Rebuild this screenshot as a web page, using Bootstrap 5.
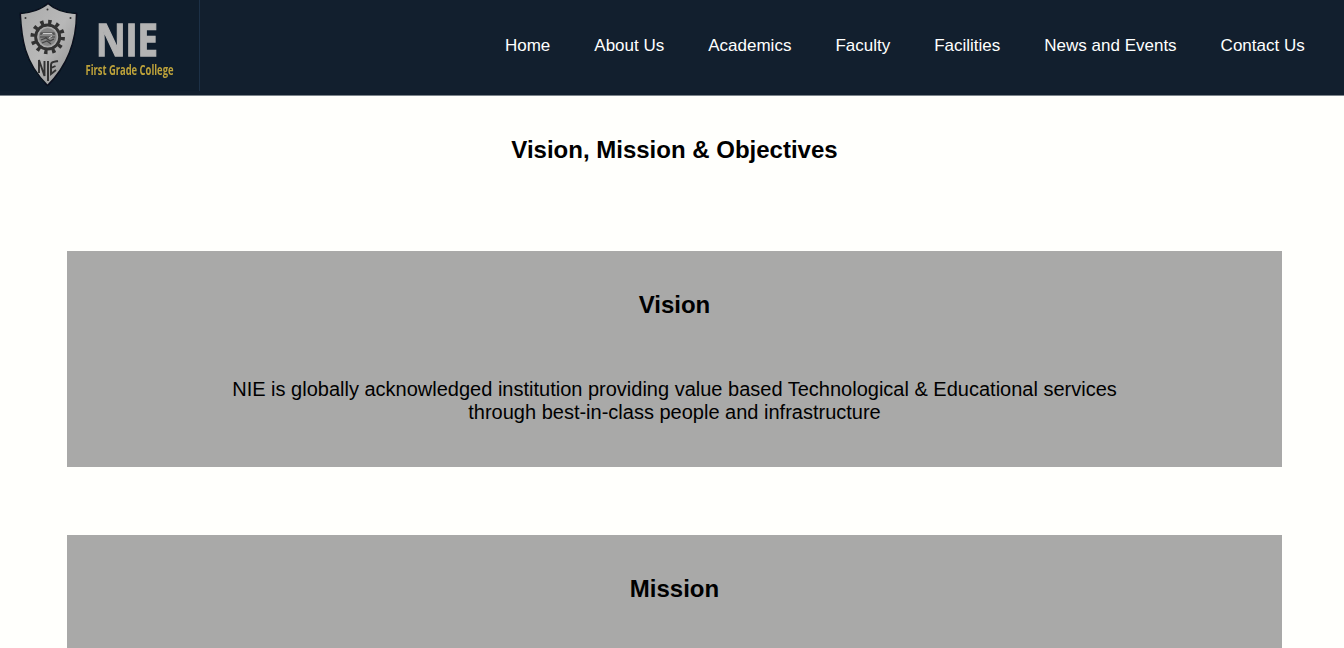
<!DOCTYPE html>
<html lang="en">
<head>
<meta charset="utf-8">
<meta name="viewport" content="width=device-width, initial-scale=1">
<title>NIE First Grade College</title>
<link href="https://cdn.jsdelivr.net/npm/bootstrap@5.3.0/dist/css/bootstrap.min.css" rel="stylesheet">
<style>
body{font-family:"Liberation Sans",Arial,sans-serif;background:#fffffc;color:#000;overflow:hidden;height:100vh}
.site-nav{height:96px;background:#121f2e;border-bottom:1px solid #7c848b}
.site-nav .nav{gap:44px;padding-right:39.300px;margin-top:33px}
.site-nav .nav-link{color:#fff;font-size:17px;line-height:25px}
.crest{width:200px;height:91px}
.page-title,.panel-title{font-size:24px;font-weight:700;line-height:28px}
.page-title{padding-top:40px;padding-left:5px;margin-bottom:86.700px}
.panel{background:#a9a9a8;margin:0 62px 68px 67px;height:216px;padding-top:40px}
.panel-title{margin-bottom:59px}
.panel-text{font-size:20px;line-height:23px;max-width:900px}
</style>
</head>
<body>
<header class="site-nav d-flex justify-content-between align-items-start">
  <a href="#" class="d-block" aria-label="NIE First Grade College">
    <svg class="crest d-block" viewBox="0 0 200 91">
      <defs>
        <linearGradient id="steel" x1="0" y1="0" x2="1" y2="1"><stop offset="0" stop-color="#aaa"/><stop offset=".5" stop-color="#b8b8b8"/><stop offset="1" stop-color="#8c8c8c"/></linearGradient>
        <filter id="soft" x="-5%" y="-5%" width="110%" height="110%"><feGaussianBlur stdDeviation=".45"/></filter>
      </defs>
      <rect width="199" height="91" fill="#0f1d2c"/>
      <path d="M199.5 0V91" stroke="#1c3046"/>
      <g filter="url(#soft)">
        <path d="M48 3.500C42 9 31 13 20.300 13.500C21.500 38 24 62 47.500 85.500C69 64 76.500 38 76.500 13.500C65 13 54 9 48 3.500Z" fill="url(#steel)" stroke="#08111b" stroke-width="1.500"/>
        <g fill="#333"><circle cx="47.500" cy="9.500" r="1"/><circle cx="25.500" cy="18" r="1"/><circle cx="70.500" cy="18" r="1"/></g>
        <circle cx="47.700" cy="37" r="15" fill="none" stroke="#333" stroke-width="4.500" stroke-dasharray="3.400 4.454"/>
        <circle cx="47.700" cy="37" r="12" fill="none" stroke="#333" stroke-width="3"/>
        <circle cx="47.700" cy="37" r="9.500" fill="#858585" stroke="#aaa" stroke-width="1.200"/>
        <path d="M41 35V33H54V35M40 37H55M41 40L46 38L50 41L54 39M42 43L47 41L51 44" fill="none" stroke="#444" stroke-width="1.200"/>
        <path d="M43 33.500H52M49 38L52 36" stroke="#ccc" stroke-width="1"/>
        <path d="M39 73V60L44.500 76V61M48 61V81M58 61C53 62 51 62 51 65V74L56 70M51 68L55.500 66" fill="none" stroke="#303030" stroke-width="1.900"/>
        <text x="96" y="56" textLength="62" lengthAdjust="spacingAndGlyphs" font-family="Open Sans, sans-serif" font-size="45.500" font-weight="700" fill="#b4b4b4" stroke="#b4b4b4" stroke-width="1.400">NIE</text>
        <text x="85.500" y="74.500" textLength="88" lengthAdjust="spacingAndGlyphs" font-family="Open Sans, sans-serif" font-size="13.500" font-weight="700" fill="#bda23a">First Grade College</text>
      </g>
    </svg>
  </a>
  <nav class="nav flex-nowrap">
    <a class="nav-link p-0" href="#">Home</a>
    <a class="nav-link p-0" href="#">About Us</a>
    <a class="nav-link p-0" href="#">Academics</a>
    <a class="nav-link p-0" href="#">Faculty</a>
    <a class="nav-link p-0" href="#">Facilities</a>
    <a class="nav-link p-0" href="#">News and Events</a>
    <a class="nav-link p-0" href="#">Contact Us</a>
  </nav>
</header>
<main class="text-center">
  <h1 class="page-title">Vision, Mission &amp; Objectives</h1>
  <section class="panel">
    <h2 class="panel-title">Vision</h2>
    <p class="panel-text mx-auto mb-0">NIE is globally acknowledged institution providing value based Technological &amp; Educational services through best-in-class people and infrastructure</p>
  </section>
  <section class="panel">
    <h2 class="panel-title">Mission</h2>
  </section>
</main>
<script src="https://cdn.jsdelivr.net/npm/bootstrap@5.3.0/dist/js/bootstrap.bundle.min.js"></script>
</body>
</html>
